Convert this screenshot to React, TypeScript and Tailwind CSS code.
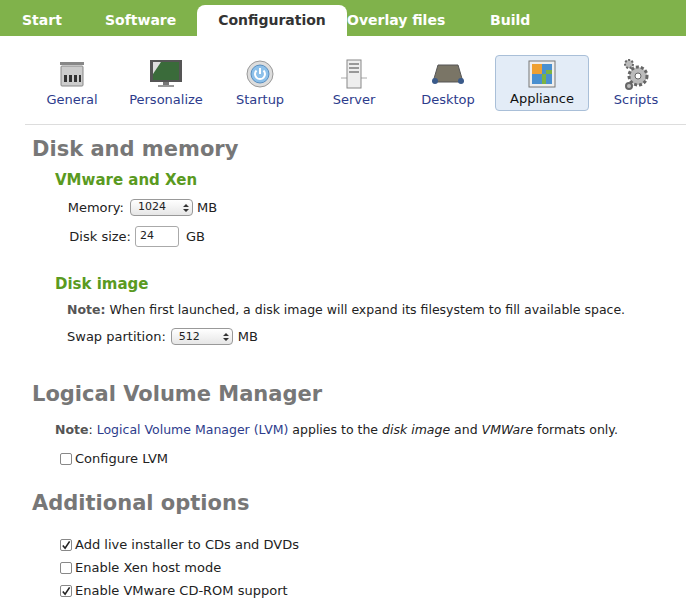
import React from "react";

const tabs: [string, string][] = [["Start", "w-[83px]"], ["Software", "w-[92px]"], ["Configuration", "w-[150px]"], ["Overlay files", "w-[143px]"], ["Build", "w-[80px]"]];

function Icon({ k }: { k: string }) {
  switch (k) {
    case "General":
      return (<svg width="30" height="30" viewBox="0 0 30 30"><rect x="3" y="3" width="24" height="3" fill="#888"/><rect x="4" y="7" width="22" height="20" rx="1" fill="#ccc" stroke="#888"/><rect x="7" y="16" width="3" height="7" fill="#333"/><rect x="12" y="16" width="3" height="7" fill="#333"/><rect x="17" y="16" width="3" height="7" fill="#333"/><rect x="22" y="16" width="2" height="7" fill="#333"/></svg>);
    case "Personalize":
      return (<svg width="34" height="30" viewBox="0 0 34 30"><rect x="1" y="1" width="32" height="22" fill="#555"/><rect x="4" y="3" width="26" height="18" fill="#3a6b3a"/><path d="M4 3 L12 3 L4 15Z" fill="#ddd"/><rect x="14" y="23" width="6" height="3" fill="#777"/><rect x="9" y="26" width="16" height="2" fill="#999"/></svg>);
    case "Startup":
      return (<svg width="30" height="30" viewBox="0 0 30 30"><circle cx="15" cy="15" r="13" fill="#ddd" stroke="#999"/><circle cx="15" cy="15" r="9" fill="#8cc0ea" stroke="#5a8fc0"/><path d="M11.5 11.5 A5 5 0 1 0 18.5 11.5" stroke="#fff" strokeWidth="2" fill="none"/><line x1="15" y1="9" x2="15" y2="15" stroke="#fff" strokeWidth="2"/></svg>);
    case "Server":
      return (<svg width="30" height="32" viewBox="0 0 30 32"><line x1="2" y1="20" x2="28" y2="20" stroke="#aaa"/><rect x="8" y="2" width="14" height="28" fill="#eee" stroke="#888"/><rect x="10" y="5" width="10" height="2" fill="#999"/><rect x="10" y="9" width="10" height="2" fill="#999"/><rect x="10" y="13" width="10" height="2" fill="#999"/></svg>);
    case "Desktop":
      return (<svg width="34" height="24" viewBox="0 0 34 24"><path d="M7 3 L27 3 L32 20 L2 20Z" fill="#7a7566" stroke="#555"/><circle cx="4" cy="19" r="3" fill="#3a5a8a"/><circle cx="30" cy="19" r="3" fill="#3a5a8a"/></svg>);
    case "Appliance":
      return (<svg width="30" height="30" viewBox="0 0 30 30"><rect x="2" y="2" width="26" height="26" fill="#eee" stroke="#777"/><rect x="5" y="5" width="20" height="20" fill="#4a90d0"/><rect x="5" y="5" width="10" height="10" fill="#f0a030"/><rect x="15" y="15" width="4" height="10" fill="#7cb342"/><rect x="19" y="11" width="6" height="4" fill="#7cb342"/></svg>);
    default:
      return (<svg width="30" height="32" viewBox="0 0 30 32"><circle cx="17" cy="18" r="9" fill="#bbb" stroke="#666" strokeWidth="3" strokeDasharray="3 2"/><circle cx="17" cy="18" r="3" fill="#fff" stroke="#666"/><circle cx="8" cy="6" r="4" fill="#bbb" stroke="#666" strokeWidth="2" strokeDasharray="2 1.5"/><circle cx="8" cy="28" r="3" fill="#bbb" stroke="#666" strokeWidth="2"/></svg>);
  }
}

const Check = ({ on, label }: { on?: boolean; label: string }) => (
  <label className="flex items-center gap-[3px] h-[23px]">
    <span className="w-[12px] h-[12px] border border-[#888] rounded-[2px] bg-white flex items-center justify-center">
      {on && <svg width="11" height="11" viewBox="0 0 11 11"><path d="M2 5.5 L4.5 8.5 L9.5 1" stroke="#222" strokeWidth="1.8" fill="none"/></svg>}
    </span>
    <span>{label}</span>
  </label>
);

const Select = ({ v, w }: { v: string; w: string }) => (
  <span className={`inline-flex items-center justify-between h-[17px] border border-[#999] rounded-[4px] bg-gradient-to-b from-white to-[#e6e6e6] text-[11px] pl-[7px] pr-[3px] ${w}`}>
    <span>{v}</span>
    <svg width="6" height="10" viewBox="0 0 6 10"><path d="M0 4 L3 1 L6 4Z M0 6 L3 9 L6 6Z" fill="#333"/></svg>
  </span>
);

export default function App() {
  return (
    <div className="w-[686px] h-[615px] bg-white overflow-hidden text-[13px] text-[#222]" style={{ fontFamily: '"DejaVu Sans", sans-serif' }}>
      <div className="h-[36px] bg-[#80b24b] flex items-end pl-[22px]">
        {tabs.map(([t, w]) => (
          <div key={t} className={`h-[31px] flex items-center font-bold text-[14px] ${w} ${t === "Configuration" ? "bg-white text-[#333] rounded-t-[8px] justify-center" : "text-white"}`}>{t}</div>
        ))}
      </div>
      <div className="flex ml-[25px] pt-[19px] pb-[13px] border-b border-[#ddd]">
        {["General", "Personalize", "Startup", "Server", "Desktop", "Appliance", "Scripts"].map((k) => (
          <div key={k} className={`w-[94px] h-[56px] flex flex-col items-center justify-between pt-[3px] pb-[2px] text-[13px] ${k === "Appliance" ? "bg-[#e3ecf7] border border-[#a9bfd8] rounded-[4px] text-[#111]" : "text-[#2d3c8c]"}`}>
            <div className="h-[34px] flex items-center"><Icon k={k} /></div>
            <span>{k}</span>
          </div>
        ))}
      </div>
      <div className="pl-[32px]">
        <h1 className="text-[21px] font-bold text-[#777] mt-[9px] leading-[30px]">Disk and memory</h1>
        <div className="pl-[23px]">
          <h2 className="text-[15px] font-bold text-[#5a9a1f] mt-[5px]">VMware and Xen</h2>
          <div className="flex items-center h-[28px] mt-[2px]"><span className="w-[75px] text-right pr-[6px]">Memory:</span><Select v="1024" w="w-[63px]" /><span className="ml-[4px]">MB</span></div>
          <div className="flex items-center h-[30px]"><span className="w-[80px] text-right pr-[4px]">Disk size:</span><span className="w-[44px] h-[21px] border border-[#aaa] rounded-[3px] text-[11px] pl-[4px] flex items-center">24</span><span className="ml-[7px]">GB</span></div>
          <h2 className="text-[15px] font-bold text-[#5a9a1f] mt-[21px]">Disk image</h2>
          <div className="pl-[12px] mt-[6px] text-[12.5px]"><b className="text-[#555]">Note:</b> When first launched, a disk image will expand its filesystem to fill available space.</div>
          <div className="flex items-center pl-[12px] h-[28px] mt-[3px]"><span className="pr-[5px]">Swap partition:</span><Select v="512" w="w-[62px]" /><span className="ml-[5px]">MB</span></div>
        </div>
        <h1 className="text-[21px] font-bold text-[#777] mt-[28px] leading-[30px]">Logical Volume Manager</h1>
        <div className="pl-[23px] mt-[12px] text-[12.5px]"><b className="text-[#555]">Note</b>: <span className="text-[#2d3c8c]">Logical Volume Manager (LVM)</span> applies to the <i>disk image</i> and <i>VMWare</i> formats only.</div>
        <div className="pl-[28px] mt-[8px]"><Check label="Configure LVM" /></div>
        <h1 className="text-[21px] font-bold text-[#777] mt-[17px] leading-[30px]">Additional options</h1>
        <div className="pl-[28px] mt-[16px]">
          <Check on label="Add live installer to CDs and DVDs" />
          <Check label="Enable Xen host mode" />
          <Check on label="Enable VMware CD-ROM support" />
        </div>
      </div>
    </div>
  );
}
